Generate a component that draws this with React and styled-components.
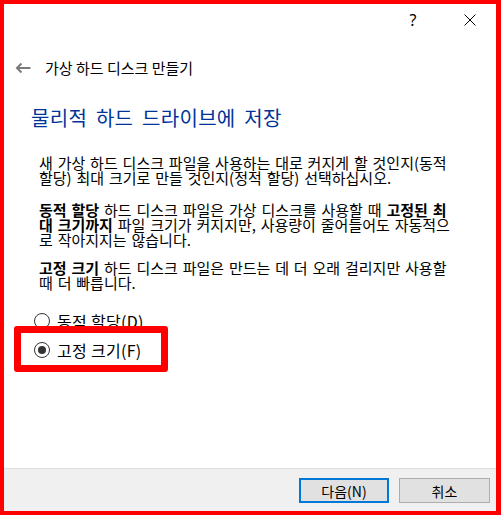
import styled, { createGlobalStyle } from 'styled-components';

const GlobalStyle = createGlobalStyle`
  html, body {
    margin: 0;
    padding: 0;
    background: #ffffff;
  }
  body {
    font-family: "Noto Sans CJK KR", "Noto Sans", sans-serif;
    color: #000000;
  }
`;

export const Frame = styled.div`
  box-sizing: border-box;
  width: 501px;
  height: 515px;
  border: 4px solid #ff0000;
  border-right-width: 5px;
  display: flex;
  flex-direction: column;
  background: #ffffff;
`;

export const TitleBar = styled.div`
  height: 31px;
  display: flex;
  justify-content: flex-end;
  align-items: stretch;
  padding-right: 3px;
`;

export const CaptionBtn = styled.div`
  width: 46px;
  display: flex;
  align-items: center;
  justify-content: center;
  font-family: "Noto Sans", "DejaVu Sans", sans-serif;
  font-size: 16px;
  color: #000000;
  margin-left: ${(p) => p.gap || 0}px;
`;

export const Body = styled.div`
  flex: 1;
  display: flex;
  flex-direction: column;
`;

export const NavRow = styled.div`
  height: 24px;
  margin-top: 21px;
  display: flex;
  align-items: center;
  padding-left: 7px;
`;

export const BackArrow = styled.div`
  width: 24px;
  display: flex;
  align-items: center;
  justify-content: center;
`;

export const WizardTitle = styled.div`
  margin-left: 10px;
  font-size: 15px;
  line-height: 24px;
  color: #000000;
`;

export const Heading = styled.h1`
  margin: 24px 0 0 27px;
  font-weight: 400;
  font-size: 20px;
  line-height: 28px;
  word-spacing: 4px;
  letter-spacing: 0.3px;
  color: #003399;
  white-space: nowrap;
`;

export const Para = styled.p`
  margin: ${(p) => p.top}px 0 0 35px;
  font-size: 15px;
  line-height: 15px;
  word-spacing: 1.5px;
  white-space: nowrap;

  b {
    font-weight: 700;
  }
`;

export const RadioList = styled.div`
  margin: 21px 0 0 30px;
  display: flex;
  flex-direction: column;
  gap: 9px;
`;

export const RadioRow = styled.label`
  position: relative;
  height: 20px;
  display: flex;
  align-items: center;
  gap: 7px;
  font-size: 16px;
  letter-spacing: 0.3px;
`;

export const RadioCircle = styled.span`
  box-sizing: border-box;
  width: 16px;
  height: 16px;
  border-radius: 50%;
  border: 1px solid #333333;
  display: flex;
  align-items: center;
  justify-content: center;

  &::after {
    content: '';
    width: 8px;
    height: 8px;
    border-radius: 50%;
    background: ${(p) => (p.checked ? '#333333' : 'transparent')};
  }
`;

export const Highlight = styled.span`
  position: absolute;
  box-sizing: border-box;
  left: -20px;
  top: -14px;
  width: 154px;
  height: 46px;
  border: 7px solid #ff0000;
  border-radius: 3px;
  pointer-events: none;
`;

export const Footer = styled.div`
  box-sizing: border-box;
  height: 43px;
  border-top: 1px solid #dfdfdf;
  background: #f0f0f0;
  display: flex;
  justify-content: flex-end;
  align-items: flex-start;
  gap: 10px;
  padding: 9px 6px 0 0;
`;

export const Button = styled.button`
  box-sizing: border-box;
  width: ${(p) => p.w}px;
  height: 25px;
  padding: 0;
  background: #e1e1e1;
  border: ${(p) => (p.primary ? '2px solid #0078d7' : '1px solid #adadad')};
  font-family: "Noto Sans CJK KR", "Noto Sans", sans-serif;
  font-size: 14px;
  color: #000000;
  display: flex;
  align-items: center;
  justify-content: center;
`;

const App = () => {
  return (
    <>
      <GlobalStyle />
      <Frame>
        <Body>
          <TitleBar>
            <CaptionBtn>?</CaptionBtn>
            <CaptionBtn gap={11}>
              <svg width="12" height="12" viewBox="0 0 12 12">
                <path d="M0.5 0.5 L11.5 11.5 M11.5 0.5 L0.5 11.5" stroke="#000" strokeWidth="1" />
              </svg>
            </CaptionBtn>
          </TitleBar>
          <NavRow>
            <BackArrow>
              <svg width="16" height="12" viewBox="0 0 16 12">
                <path d="M15.5 6 H2 M6.5 1.5 L2 6 L6.5 10.5" stroke="#7a7a7a" strokeWidth="2" fill="none" />
              </svg>
            </BackArrow>
            <WizardTitle>가상 하드 디스크 만들기</WizardTitle>
          </NavRow>
          <Heading>물리적 하드 드라이브에 저장</Heading>
          <Para top={23}>
            새 가상 하드 디스크 파일을 사용하는 대로 커지게 할 것인지(동적
            <br />
            할당) 최대 크기로 만들 것인지(정적 할당) 선택하십시오.
          </Para>
          <Para top={17}>
            <b>동적 할당</b> 하드 디스크 파일은 가상 디스크를 사용할 때 <b>고정된 최</b>
            <br />
            <b>대 크기까지</b> 파일 크기가 커지지만, 사용량이 줄어들어도 자동적으
            <br />
            로 작아지지는 않습니다.
          </Para>
          <Para top={13}>
            <b>고정 크기</b> 하드 디스크 파일은 만드는 데 더 오래 걸리지만 사용할
            <br />
            때 더 빠릅니다.
          </Para>
          <RadioList>
            <RadioRow>
              <RadioCircle />
              동적 할당(D)
            </RadioRow>
            <RadioRow>
              <RadioCircle checked />
              고정 크기(F)
              <Highlight />
            </RadioRow>
          </RadioList>
        </Body>
        <Footer>
          <Button primary w={90}>다음(N)</Button>
          <Button w={91}>취소</Button>
        </Footer>
      </Frame>
    </>
  );
};

export default App;
